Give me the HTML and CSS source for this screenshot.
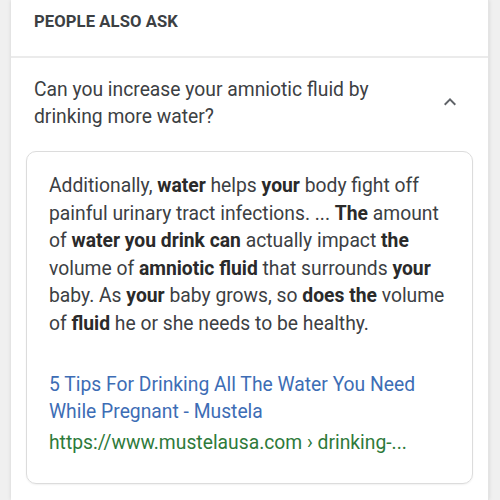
FILE: index.html
```html
<!DOCTYPE html>
<html>
<head>
<meta charset="utf-8">
<link rel="stylesheet" href="styles.css">
</head>
<body>
<div class="page">
  <div class="card">
    <div class="head">PEOPLE ALSO ASK</div>
    <div class="question">
      <div class="qtext">Can you increase your amniotic fluid by<br>drinking more water?</div>
      <svg class="chev" width="24" height="24" viewBox="0 0 24 24"><path d="M7.4 15.4 12 10.8l4.6 4.6L18 14l-6-6-6 6z" fill="#5f6368"/></svg>
    </div>
    <div class="answer">
      <p class="snippet">Additionally, <b>water</b> helps <b>your</b> body fight off<br>painful urinary tract infections. ... <b>The</b> amount<br>of <b>water you drink can</b> actually impact <b>the</b><br>volume of <b>amniotic fluid</b> that surrounds <b>your</b><br>baby. As <b>your</b> baby grows, so <b>does the</b> volume<br>of <b>fluid</b> he or she needs to be healthy.</p>
      <a class="title" href="#">5 Tips For Drinking All The Water You Need<br>While Pregnant - Mustela</a>
      <div class="url">https://www.mustelausa.com › drinking-...</div>
    </div>
  </div>
</div>
</body>
</html>
```
FILE: styles.css
```css
html, body { margin: 0; padding: 0; }
body {
  width: 500px; height: 500px; overflow: hidden;
  background: #f0f0f0;
  font-family: Roboto, "Liberation Sans", sans-serif;
}
.page { padding: 0 11px 0 11px; height: 500px; }
.card {
  background: #fff;
  height: 500px;
  box-shadow: 0 0 4px rgba(0,0,0,0.12);
  border-right: 1px solid #e4e4e4;
}
.head {
  height: 58px;
  box-sizing: border-box;
  padding: 12px 0 0 23px;
  font-size: 16.6px;
  line-height: 20px;
  font-weight: bold;
  color: #3c4043;
  letter-spacing: 0.1px;
  border-bottom: 2px solid #ebebeb;
}
.question {
  display: flex;
  align-items: center;
  padding: 18px 26px 0 23px;
}
.qtext {
  flex: 1;
  font-size: 19.3px;
  line-height: 27px;
  color: #3c4043;
  white-space: nowrap;
}
.chev { margin-top: -2px; }
.answer {
  margin: 21px 15px 0 15px;
  border: 1px solid #dcdcdc;
  border-radius: 10px;
  padding: 20px 10px 27px 22px;
  box-shadow: 0 1px 2px rgba(0,0,0,0.06);
}
.snippet {
  margin: 0;
  font-size: 19.3px;
  line-height: 27.6px;
  color: #3c4043;
  white-space: nowrap;
}
.snippet b { color: #2a2a2a; }
.title {
  display: block;
  margin-top: 33px;
  font-size: 19.3px;
  line-height: 27.5px;
  color: #3d6db5;
  text-decoration: none;
  white-space: nowrap;
}
.url {
  margin-top: 3px;
  font-size: 19.3px;
  line-height: 27px;
  color: #2e7a3a;
  white-space: nowrap;
}
```
